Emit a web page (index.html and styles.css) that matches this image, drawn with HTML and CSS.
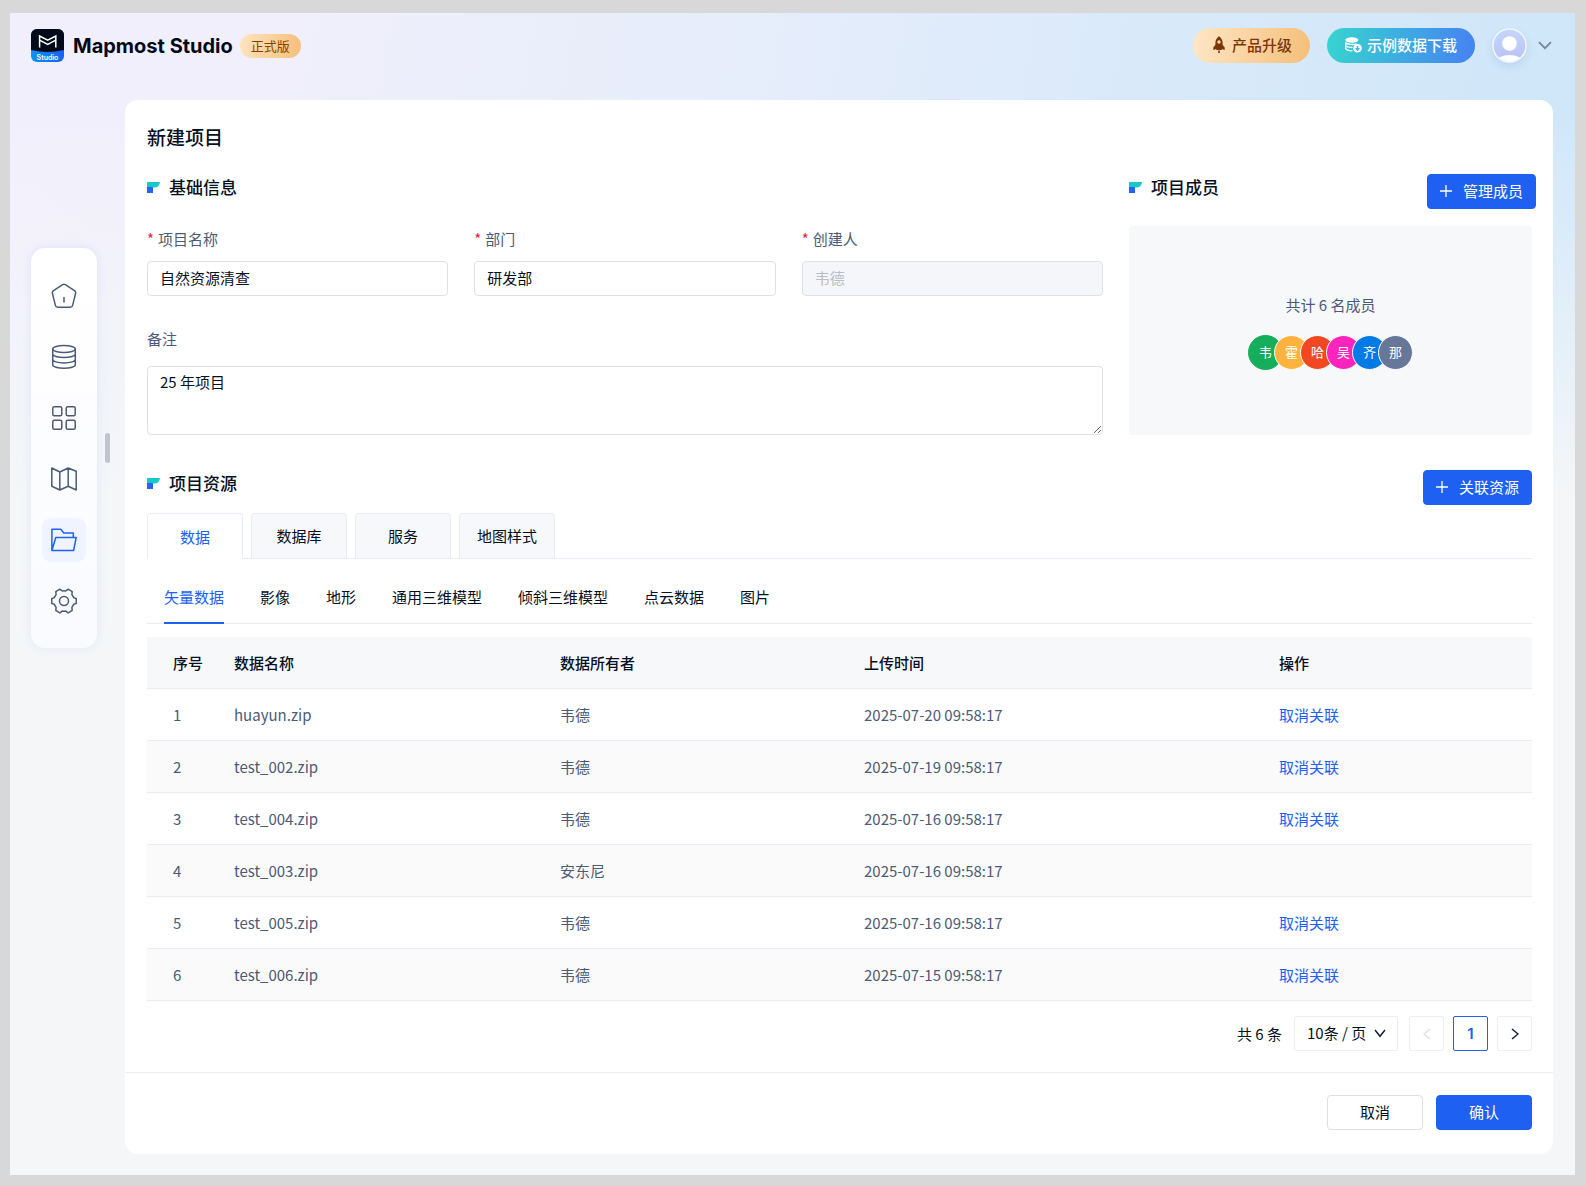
FILE: index.html
```html
<!DOCTYPE html>
<html lang="zh-CN">
<head>
<meta charset="utf-8">
<meta name="viewport" content="width=device-width, initial-scale=1">
<title>新建项目 - Mapmost Studio</title>
<link rel="stylesheet" href="styles.css">
</head>
<body>
<div class="app">
  <header class="topbar">
    <div class="brand">
      <svg class="brand-logo" width="33" height="33" viewBox="0 0 33 33" aria-hidden="true">
        <defs>
          <linearGradient id="logoBlue" x1="0" x2="1" y1="0" y2="0"><stop offset="0" stop-color="#0a93ff"/><stop offset="1" stop-color="#1c5ffb"/></linearGradient>
          <clipPath id="logoClip"><rect width="33" height="33" rx="6"/></clipPath>
        </defs>
        <g clip-path="url(#logoClip)">
          <rect width="33" height="33" fill="url(#logoBlue)"/>
          <path d="M0 0H33V21Q16.500 25 0 21Z" fill="#020a1a"/>
          <path d="M8.600 18.600V7L16.700 11.200L24.800 7V18.600M8.600 11.200L16.700 15.400L24.800 11.200" fill="none" stroke="#fff" stroke-width="1.500"/>
        </g>
        <text class="logo-text" x="16.500" y="30.500" text-anchor="middle">Studio</text>
      </svg>
      <span class="brand-name">Mapmost Studio</span>
      <span class="badge">正式版</span>
    </div>
    <div class="top-actions">
      <button class="pill pill-gold" type="button">
        <svg width="12" height="18" viewBox="0 0 12 18" fill="#7a3606" aria-hidden="true"><path fill-rule="evenodd" d="M6 .3C8.700 2.200 9.600 4.500 9.600 7V8.700L11.700 11.600V14L8.800 13.100V14H3.200V13.100L.3 14V11.600L2.400 8.700V7C2.400 4.500 3.300 2.200 6 .3ZM6 4.300A1.700 1.700 0 1 0 6 7.700A1.700 1.700 0 1 0 6 4.300Z"/><path d="M5.200 14.500H6.800V16.500L6 17.500L5.200 16.500Z"/></svg>
        产品升级
      </button>
      <button class="pill pill-teal" type="button">
        <svg width="17" height="16" viewBox="0 0 17 16" aria-hidden="true"><ellipse cx="6.800" cy="3" rx="6.500" ry="2.800" fill="#fff"/><path d="M.5 5.500C2 7.600 8 8 11.500 6.800M.5 8.500C1.600 10 4.500 10.600 7.500 10.300M.5 11.700C1.600 13.200 4.500 14 7.500 13.700M.7 5.500V12" fill="none" stroke="#fff" stroke-width="1.300"/><circle cx="12.500" cy="11.300" r="4.300" fill="#fff"/><path d="M12.500 9V12.500M10.700 11.200L12.500 13.200L14.300 11.200" fill="none" stroke="#3fb4d8" stroke-width="1.400"/></svg>
        示例数据下载
      </button>
      <button class="account" type="button" aria-label="账户">
        <svg class="account-photo" width="35" height="35" viewBox="0 0 35 35" aria-hidden="true">
          <defs><clipPath id="avatarClip"><circle cx="17.500" cy="17.500" r="16"/></clipPath>
          <linearGradient id="avatarFill" x1="0" x2="0" y1="0" y2="1"><stop offset="0" stop-color="#c6d4fd"/><stop offset="1" stop-color="#b7c4f5"/></linearGradient></defs>
          <circle cx="17.500" cy="17.500" r="16.600" fill="url(#avatarFill)" stroke="#f4f7ff" stroke-width="1.500"/>
          <circle cx="17.500" cy="15.500" r="7.300" fill="#fff"/>
          <ellipse cx="17.500" cy="34" rx="13" ry="7" fill="#fff" clip-path="url(#avatarClip)"/>
        </svg>
        <svg width="14" height="9" viewBox="0 0 14 9" fill="none" stroke="#76839a" stroke-width="1.700" aria-hidden="true"><path d="M1 1.200L7 7.200L13 1.200"/></svg>
      </button>
    </div>
  </header>

  <div class="workspace">
    <div class="rail">
      <nav class="sidebar" aria-label="主导航">
        <a class="nav-item" href="#home" aria-label="首页"><svg width="26" height="26" viewBox="0 0 26 26"><path d="M11.600 1.700Q13 .8 14.400 1.700L23.500 7.600Q25 8.600 24.600 10.300L21.600 22.400Q21.100 24.300 19.200 24.300H6.800Q4.900 24.300 4.400 22.400L1.400 10.300Q1 8.600 2.500 7.600ZM13 14V19.500"/></svg></a>
        <a class="nav-item" href="#data" aria-label="数据"><svg width="26" height="26" viewBox="0 0 26 26"><ellipse cx="13" cy="5" rx="11.300" ry="3.500"/><path d="M1.700 5V20.700C1.700 22.600 6.700 24.200 13 24.200S24.300 22.600 24.300 20.700V5M1.700 10C1.700 11.900 6.700 13.500 13 13.500S24.300 11.900 24.300 10M1.700 15.400C1.700 17.300 6.700 18.900 13 18.900S24.300 17.300 24.300 15.400"/></svg></a>
        <a class="nav-item" href="#apps" aria-label="应用"><svg width="26" height="26" viewBox="0 0 26 26"><rect x="1.800" y="1.800" width="9" height="9" rx="1.500"/><rect x="15.200" y="1.800" width="9" height="9" rx="1.500"/><rect x="1.800" y="15.200" width="9" height="9" rx="1.500"/><rect x="15.200" y="15.200" width="9" height="9" rx="1.500"/></svg></a>
        <a class="nav-item" href="#map" aria-label="地图"><svg width="26" height="26" viewBox="0 0 26 26"><path d="M.8 2L8.800 6L17.200 2L25.200 5.200V24L17.200 20.300L8.800 24L.8 20.300ZM8.800 6V24M17.200 2V20.300"/></svg></a>
        <a class="nav-item nav-active" href="#projects" aria-label="项目" aria-current="page"><svg width="26" height="26" viewBox="0 0 26 26"><path d="M.9 23.500V2.300H9.800L12.800 6H22.300V10.500M.9 23.500L4.800 10.500H25.200L22.600 23.500Z"/></svg></a>
        <a class="nav-item" href="#settings" aria-label="设置"><svg width="26" height="26" viewBox="0 0 26 26"><path d="M25.300 10.800V15.200L22.700 16.400Q21.900 18 20.900 19.400L21.200 22.400L17.200 24.800L14.800 23.100Q13 23.300 11.200 23.100L8.800 24.800L4.800 22.400L5.100 19.400Q4.100 18 3.300 16.400L.7 15.200V10.800L3.300 9.600Q4.100 8 5.100 6.600L4.800 3.600L8.800 1.200L11.200 2.900Q13 2.700 14.800 2.900L17.200 1.200L21.200 3.600L20.900 6.600Q21.900 8 22.700 9.600Z"/><circle cx="13" cy="13" r="4.500"/></svg></a>
      </nav>
      <span class="rail-handle"></span>
    </div>

    <main class="panel">
      <div class="panel-body">
        <h1 class="page-title">新建项目</h1>

        <div class="overview">
          <section>
            <h2 class="section-title"><svg width="13" height="11" viewBox="0 0 13 11" aria-hidden="true"><path d="M0 0H13Q12.500 5.500 7 5.500H0Z" fill="#17c9cb"/><rect y="5" width="6" height="6" fill="#2464f4"/></svg>基础信息</h2>
            <div class="fields">
              <div class="field">
                <label class="label" for="name"><span class="required">*</span>项目名称</label>
                <input class="input" id="name" type="text" value="自然资源清查">
              </div>
              <div class="field">
                <label class="label" for="dept"><span class="required">*</span>部门</label>
                <input class="input" id="dept" type="text" value="研发部">
              </div>
              <div class="field">
                <label class="label" for="owner"><span class="required">*</span>创建人</label>
                <input class="input" id="owner" type="text" value="韦德" disabled>
              </div>
            </div>
            <div class="remark">
              <label class="label" for="remark">备注</label>
              <textarea class="input textarea" id="remark">25 年项目</textarea>
            </div>
          </section>

          <section class="members">
            <div class="section-head">
              <h2 class="section-title"><svg width="13" height="11" viewBox="0 0 13 11" aria-hidden="true"><path d="M0 0H13Q12.500 5.500 7 5.500H0Z" fill="#17c9cb"/><rect y="5" width="6" height="6" fill="#2464f4"/></svg>项目成员</h2>
              <button class="btn btn-primary btn-manage" type="button"><svg width="12" height="12" viewBox="0 0 12 12" stroke="#fff" stroke-width="1.300" aria-hidden="true"><path d="M6 0V12M0 6H12"/></svg>管理成员</button>
            </div>
            <div class="member-box">
              <p class="member-count">共计 6 名成员</p>
              <div class="avatars">
                <span class="avatar avatar-green">韦</span>
                <span class="avatar avatar-amber">霍</span>
                <span class="avatar avatar-red">哈</span>
                <span class="avatar avatar-pink">吴</span>
                <span class="avatar avatar-blue">齐</span>
                <span class="avatar avatar-slate">那</span>
              </div>
            </div>
          </section>
        </div>

        <section class="resources">
          <div class="section-head">
            <h2 class="section-title"><svg width="13" height="11" viewBox="0 0 13 11" aria-hidden="true"><path d="M0 0H13Q12.500 5.500 7 5.500H0Z" fill="#17c9cb"/><rect y="5" width="6" height="6" fill="#2464f4"/></svg>项目资源</h2>
            <button class="btn btn-primary" type="button"><svg width="12" height="12" viewBox="0 0 12 12" stroke="#fff" stroke-width="1.300" aria-hidden="true"><path d="M6 0V12M0 6H12"/></svg>关联资源</button>
          </div>

          <div class="tabs" role="tablist">
            <button class="tab tab-active" type="button" role="tab" aria-selected="true">数据</button>
            <button class="tab" type="button" role="tab">数据库</button>
            <button class="tab" type="button" role="tab">服务</button>
            <button class="tab" type="button" role="tab">地图样式</button>
          </div>

          <div class="subtabs" role="tablist">
            <button class="subtab subtab-active" type="button" role="tab" aria-selected="true">矢量数据</button>
            <button class="subtab" type="button" role="tab">影像</button>
            <button class="subtab" type="button" role="tab">地形</button>
            <button class="subtab" type="button" role="tab">通用三维模型</button>
            <button class="subtab" type="button" role="tab">倾斜三维模型</button>
            <button class="subtab" type="button" role="tab">点云数据</button>
            <button class="subtab" type="button" role="tab">图片</button>
          </div>

          <table class="table">
            <colgroup><col class="col-index"><col class="col-name"><col class="col-owner"><col class="col-time"><col class="col-action"></colgroup>
            <thead>
              <tr><th>序号</th><th>数据名称</th><th>数据所有者</th><th>上传时间</th><th>操作</th></tr>
            </thead>
            <tbody>
              <tr><td>1</td><td>huayun.zip</td><td>韦德</td><td>2025-07-20 09:58:17</td><td><a class="link" href="#unlink-1">取消关联</a></td></tr>
              <tr><td>2</td><td>test_002.zip</td><td>韦德</td><td>2025-07-19 09:58:17</td><td><a class="link" href="#unlink-2">取消关联</a></td></tr>
              <tr><td>3</td><td>test_004.zip</td><td>韦德</td><td>2025-07-16 09:58:17</td><td><a class="link" href="#unlink-3">取消关联</a></td></tr>
              <tr><td>4</td><td>test_003.zip</td><td>安东尼</td><td>2025-07-16 09:58:17</td><td></td></tr>
              <tr><td>5</td><td>test_005.zip</td><td>韦德</td><td>2025-07-16 09:58:17</td><td><a class="link" href="#unlink-5">取消关联</a></td></tr>
              <tr><td>6</td><td>test_006.zip</td><td>韦德</td><td>2025-07-15 09:58:17</td><td><a class="link" href="#unlink-6">取消关联</a></td></tr>
            </tbody>
          </table>

          <div class="pagination">
            <span class="total">共 6 条</span>
            <div class="page-size">
              <select class="page-select" aria-label="每页条数"><option>10条 / 页</option></select>
              <svg class="page-arrow" width="12" height="9" viewBox="0 0 12 9" fill="none" stroke="#0d1830" stroke-width="1.400" aria-hidden="true"><path d="M1 1L6 7.300L11 1"/></svg>
            </div>
            <button class="page-btn" type="button" aria-label="上一页" disabled><svg width="8" height="12" viewBox="0 0 8 12" fill="none" stroke="#dde1ec" stroke-width="1.300"><path d="M7 1L1 6L7 11"/></svg></button>
            <button class="page-btn page-current" type="button">1</button>
            <button class="page-btn" type="button" aria-label="下一页"><svg width="8" height="12" viewBox="0 0 8 12" fill="none" stroke="#0d1830" stroke-width="1.400"><path d="M1 1L7 6L1 11"/></svg></button>
          </div>
        </section>
      </div>

      <footer class="panel-footer">
        <button class="btn btn-plain btn-wide" type="button">取消</button>
        <button class="btn btn-primary btn-wide" type="button">确认</button>
      </footer>
    </main>
  </div>
</div>
</body>
</html>
```
FILE: styles.css
```css
* {
  box-sizing: border-box;
}

body {
  margin: 0;
  padding: 13px 11px 11px 10px;
  background: #d8d8d8;
  color: #061023;
  font-family: "Noto Sans CJK SC", "Noto Sans", sans-serif;
  font-size: 15px;
  line-height: 22px;
}

button,
input,
select,
textarea {
  font: inherit;
  color: inherit;
  margin: 0;
}

button {
  cursor: pointer;
}

svg {
  display: block;
  flex: none;
}

h1,
h2,
p {
  margin: 0;
  font-weight: 500;
}

.app {
  min-height: calc(100vh - 24px);
  padding-bottom: 21px;
  background:
    linear-gradient(180deg, rgba(244, 246, 248, 0) 0, rgba(244, 246, 248, 0) 100px, #f4f6f8 480px),
    linear-gradient(100deg, #f2effc 0%, #f0effb 16%, #e6edfb 42%, #d4e8f9 75%, #cce6f9 100%);
}

/* Top bar */
.topbar {
  display: flex;
  align-items: center;
  justify-content: space-between;
  padding: 15px 23px 37px 21px;
}

.brand,
.top-actions,
.account {
  display: flex;
  align-items: center;
}

.brand-name {
  margin-left: 9px;
  color: #020a1a;
  font: 700 20px/30px Inter, sans-serif;
}

.logo-text {
  font: 600 7px Inter, sans-serif;
  fill: #fff;
}

.badge {
  margin-left: 7px;
  padding: 0 11px;
  border-radius: 12px;
  background: linear-gradient(100deg, #fee4c0, #f5bf78);
  color: #87430e;
  font-size: 13px;
  font-weight: 400;
  line-height: 24px;
}

.top-actions {
  gap: 17px;
}

.pill {
  display: flex;
  align-items: center;
  height: 35px;
  border: 0;
  border-radius: 18px;
  font-weight: 500;
}

.pill-gold {
  gap: 7px;
  padding: 0 18px 1px 20px;
  background: linear-gradient(100deg, #fee6c8, #f5bf78);
  color: #7a3606;
}

.pill-teal {
  gap: 5px;
  padding: 0 18px 1px;
  background: linear-gradient(100deg, #37d5cf, #4681f3);
  color: #fff;
}

.account {
  gap: 11px;
  padding: 0;
  border: 0;
  background: none;
}

.account-photo {
  border-radius: 50%;
  box-shadow: 0 4px 8px rgba(90, 120, 180, 0.16);
}

/* Side rail */
.workspace {
  display: flex;
  align-items: flex-start;
  padding-right: 22px;
}

.rail {
  display: flex;
  flex: none;
  align-items: center;
  gap: 8px;
  width: 115px;
  margin-top: 148px;
  padding-left: 21px;
}

.sidebar {
  display: flex;
  flex-direction: column;
  align-items: center;
  gap: 17px;
  width: 66px;
  padding: 26px 0 25px;
  border-radius: 14px;
  background: linear-gradient(180deg, #fff, #fafbff);
  box-shadow: 0 0 10px rgba(100, 130, 240, 0.13);
}

.nav-item {
  display: grid;
  place-items: center;
  width: 44px;
  height: 44px;
  border-radius: 9px;
  fill: none;
  stroke: #4b5b76;
  stroke-width: 1.5;
  stroke-linejoin: round;
}

.nav-active {
  background: #eff4ff;
  stroke: #2060f3;
}

.rail-handle {
  width: 5px;
  height: 30px;
  border-radius: 3px;
  background: #c0c4d0;
}

/* Panel */
.panel {
  flex: 1;
  min-width: 0;
  border-radius: 13px;
  background: #fff;
}

.panel-body {
  padding: 22px 21px 21px 22px;
}

.page-title {
  font-size: 19px;
  line-height: 30px;
}

.section-head {
  display: flex;
  align-items: flex-start;
  justify-content: space-between;
}

.section-title {
  display: flex;
  align-items: center;
  gap: 9px;
  font-size: 17px;
  line-height: 26px;
}

.btn {
  display: flex;
  align-items: center;
  justify-content: center;
  gap: 11px;
  height: 35px;
  padding: 0 12px 1px;
  border: 1px solid transparent;
  border-radius: 4px;
}

.btn-primary {
  border-color: #1e60f2;
  background: #1e60f2;
  color: #fff;
}

.btn-plain {
  border-color: #dcdfe6;
  background: #fff;
}

.btn-wide {
  width: 96px;
}

/* Basic information */
.overview {
  display: grid;
  grid-template-columns: minmax(0, 1fr) 403px;
  gap: 26px;
  margin-top: 22px;
}

.fields {
  display: grid;
  grid-template-columns: repeat(3, minmax(0, 1fr));
  gap: 26px;
  margin-top: 28px;
}

.label {
  display: block;
  color: #4b5b76;
}

.required {
  margin-right: 4px;
  color: #e0263c;
}

.input {
  display: block;
  width: 100%;
  height: 35px;
  padding: 0 12px 2px;
  border: 1px solid #dfe1e8;
  border-radius: 4px;
  background: #fff;
}

.input:disabled {
  background: #f5f6fa;
  color: #b8bdc9;
}

.field .input {
  margin-top: 11px;
}

.remark {
  margin-top: 32px;
}

.textarea {
  height: 69px;
  margin-top: 16px;
  padding-top: 4px;
  resize: both;
}

/* Members */
.members {
  display: flex;
  flex-direction: column;
  gap: 17px;
}

.btn-manage {
  margin-right: -4px;
}

.member-box {
  display: flex;
  flex: 1;
  flex-direction: column;
  align-items: center;
  justify-content: center;
  gap: 19px;
  padding-top: 2px;
  border-radius: 4px;
  background: #f6f8fa;
}

.member-count {
  color: #4b5b76;
  font-weight: 400;
}

.avatars {
  display: flex;
}

.avatar {
  display: grid;
  place-items: center;
  width: 35px;
  height: 35px;
  border: 1px solid #fff;
  border-radius: 50%;
  color: #fff;
  font-size: 13px;
}

.avatar + .avatar {
  margin-left: -9px;
}

.avatar-green {
  border-color: #16ad5b;
  background: #16ad5b;
}

.avatar-amber {
  background: #ffb23e;
}

.avatar-red {
  background: #f24822;
}

.avatar-pink {
  background: #ff24bd;
}

.avatar-blue {
  background: #007be5;
}

.avatar-slate {
  background: #667799;
}

/* Resources */
.resources {
  margin-top: 35px;
}

.tabs {
  display: flex;
  gap: 8px;
  margin-top: 8px;
  border-bottom: 1px solid #e9ecf4;
}

.tab {
  width: 96px;
  height: 45px;
  padding: 0;
  border: 1px solid #e9ecf4;
  border-bottom: 0;
  border-radius: 4px 4px 0 0;
  background: #f6f8fa;
}

.tab-active {
  height: 46px;
  margin-bottom: -1px;
  background: #fff;
  color: #2060f3;
}

.subtabs {
  display: flex;
  gap: 36px;
  padding: 27px 17px 0;
  box-shadow: inset 0 -1px #e9ecf4;
}

.subtab {
  padding: 0 0 14px;
  border: 0;
  border-bottom: 2px solid transparent;
  background: none;
}

.subtab-active {
  border-bottom-color: #2060f3;
  color: #2060f3;
}

.table {
  width: 100%;
  margin-top: 13px;
  border-collapse: separate;
  border-spacing: 0;
  table-layout: fixed;
  color: #4b5b76;
}

.col-index {
  width: 87px;
}

.col-name {
  width: 326px;
}

.col-owner {
  width: 304px;
}

.col-time {
  width: 415px;
}

.col-action {
  width: 253px;
}

.table th,
.table td {
  height: 52px;
  padding: 0;
  border-bottom: 1px solid #e9ecf2;
  text-align: left;
}

.table th {
  background: #f6f8fa;
  color: #061023;
  font-weight: 500;
}

.table th:first-child,
.table td:first-child {
  padding-left: 26px;
}

.table tbody tr:nth-child(even) {
  background: #fafafa;
}

.link {
  color: #2060f3;
  text-decoration: none;
}

/* Pagination */
.pagination {
  display: flex;
  align-items: center;
  justify-content: flex-end;
  gap: 9px;
  margin-top: 15px;
}

.total {
  margin-right: 3px;
}

.page-size {
  position: relative;
  margin-right: 2px;
}

.page-select {
  display: block;
  width: 104px;
  height: 35px;
  padding: 0 12px 2px;
  border: 1px solid #eceef5;
  border-radius: 2px;
  background: #fff;
  appearance: none;
}

.page-arrow {
  position: absolute;
  top: 13px;
  right: 12px;
  pointer-events: none;
}

.page-btn {
  display: grid;
  place-items: center;
  width: 35px;
  height: 35px;
  padding: 0;
  border: 1px solid #eceef5;
  border-radius: 2px;
  background: #fff;
}

.page-current {
  border-color: #2060f3;
  color: #2060f3;
  font-family: Inter, sans-serif;
  font-weight: 600;
}

.panel-footer {
  display: flex;
  justify-content: flex-end;
  gap: 13px;
  padding: 22px 21px 24px;
  border-top: 1px solid #eceef1;
}
```
